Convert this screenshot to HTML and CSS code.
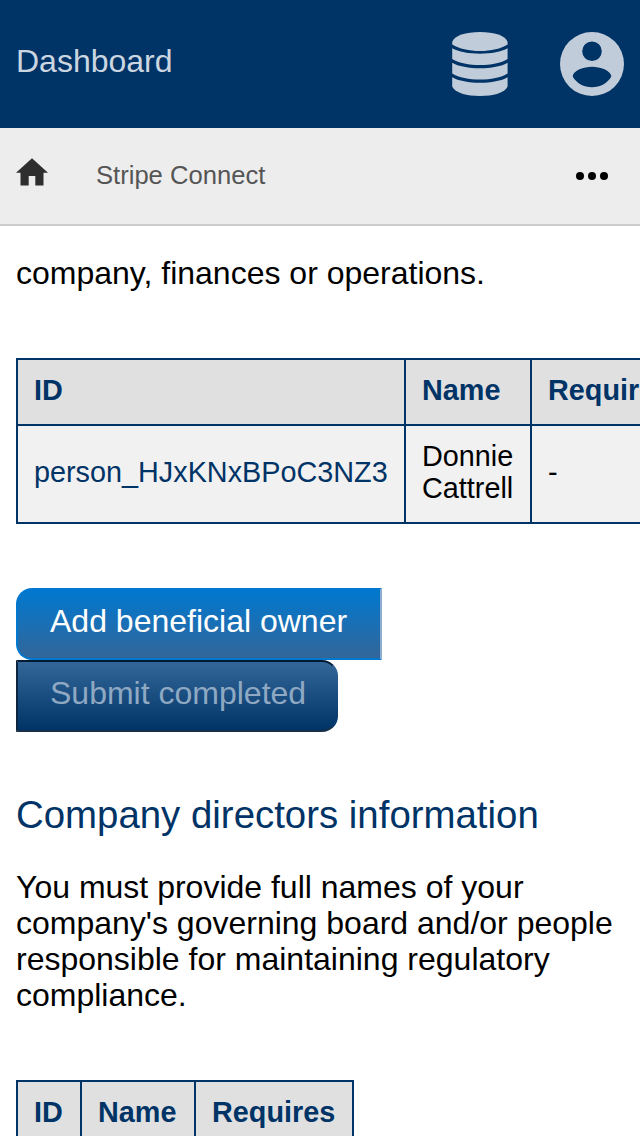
FILE: index.html
```html
<!DOCTYPE html>
<html lang="en">
<head>
<meta charset="utf-8">
<title>Stripe Connect</title>
<link rel="stylesheet" href="styles.css">
</head>
<body>
<header class="topbar">
  <span class="topbar-title">Dashboard</span>
  <div class="topbar-icons">
    <svg width="56" height="64" viewBox="0 0 56 64" fill="currentColor">
      <path d="M.2 10C2 3.500 14 0 28 0s25.800 3.500 27.600 10V12.500C49 16.800 39 19 28 19S7 16.800.2 12.500z"/>
      <path d="M.2 16.300C12 23.500 44 23.500 55.600 16.300V27C49 31 39 33 28 33S7 31 .2 27z"/>
      <path d="M.2 30.700C12 38 44 38 55.600 30.700V41.500C49 45.500 39 47.500 28 47.500S7 45.500 .2 41.500z"/>
      <path d="M.2 45.300C12 52.600 44 52.600 55.600 45.300V54.500C53 61 41 64 28 64S3 61 .2 54.500z"/>
    </svg>
    <svg width="64" height="64" viewBox="0 0 64 64" fill="currentColor" fill-rule="evenodd">
      <path d="M32 0a32 32 0 1 1 0 64 32 32 0 0 1 0-64zM32 9.400a9.800 9.800 0 1 0 0 19.600 9.800 9.800 0 0 0 0-19.600zM12.700 44.500C16.500 51.500 24 55.200 32 55.200S47.500 51.500 51.300 44.500C51 38.500 40 34.800 32 34.800S13 38.500 12.700 44.500z"/>
    </svg>
  </div>
</header>
<nav class="subbar">
  <svg class="home" width="32" height="28" viewBox="0 0 32 28"><path d="M16 .3L32 14.700H27.500V27.600H19.300V18H12.700V27.600H4.500V14.700H0z"/></svg>
  <span class="crumb">Stripe Connect</span>
  <svg class="dots" width="32" height="8" viewBox="0 0 32 8"><circle cx="4" cy="4" r="4"/><circle cx="16" cy="4" r="4"/><circle cx="28" cy="4" r="4"/></svg>
</nav>
<main class="content">
  <p class="text intro">company, finances or operations.</p>
  <table class="grid owners">
    <tr><th class="col-id">ID</th><th class="col-name">Name</th><th class="col-req">Requires</th></tr>
    <tr><td><a class="link">person_HJxKNxBPoC3NZ3</a></td><td>Donnie Cattrell</td><td>-</td></tr>
  </table>
  <div class="actions">
    <button class="btn btn-add">Add beneficial owner</button>
    <button class="btn btn-submit">Submit completed</button>
  </div>
  <h2 class="heading">Company directors information</h2>
  <p class="text">You must provide full names of your company's governing board and/or people responsible for maintaining regulatory compliance.</p>
  <table class="grid directors">
    <tr><th class="dir-id">ID</th><th class="dir-name">Name</th><th class="dir-req">Requires</th></tr>
  </table>
</main>
</body>
</html>
```
FILE: styles.css
```css
* { box-sizing: border-box; }
html { overflow: hidden; }
body {
  margin: 0;
  height: 1136px;
  overflow: hidden;
  background: #fff;
  color: #000;
  font: 32px/36px "Liberation Sans", Arial, sans-serif;
}
.topbar {
  display: flex;
  align-items: center;
  justify-content: space-between;
  height: 128px;
  padding: 0 16px;
  background: #036;
  color: #c0ccd9;
}
.topbar-title { color: #ccd6e0; padding-bottom: 6px; }
.topbar-icons { display: flex; gap: 52px; }
.subbar {
  display: flex;
  align-items: center;
  height: 98px;
  padding: 0 32px 0 16px;
  background: #ededed;
  border-bottom: 2px solid #ccc;
}
.home { fill: #2e2e2e; margin-bottom: 8px; }
.crumb { flex: 1; margin-left: 48px; padding-bottom: 2px; color: #555; font-size: 25.6px; }
.content { padding: 29px 16px 0; overflow: hidden; }
.text { margin: 0; }
.grid {
  border-collapse: collapse;
  color: #000;
  font-size: 28.8px;
  line-height: 32px;
}
.grid th, .grid td {
  padding: 14px 16px 18px;
  border: 2px solid #036;
  text-align: left;
}
.grid th { height: 66px; background: #e0e0e0; color: #036; }
.grid td { height: 98px; background: #f1f1f1; }
.owners { width: 701px; margin-top: 67px; table-layout: fixed; }
.col-id { width: 388px; }
.col-name { width: 126px; }
.link { color: #036; }
.actions {
  display: flex;
  flex-direction: column;
  align-items: flex-start;
  margin-top: 64px;
}
.btn {
  height: 72px;
  padding: 0 0 6px 32px;
  font: inherit;
  text-align: left;
  white-space: nowrap;
}
.btn-add {
  width: 366px;
  border: 2px solid #0078d0;
  border-right-color: #8cadce;
  border-radius: 16px 0 0 16px;
  background: linear-gradient(#0078d0, #369);
  color: #fff;
}
.btn-submit {
  width: 322px;
  border: 2px solid;
  border-color: #001a33 transparent #19304a #0d2640;
  border-radius: 0 16px 16px 0;
  background: linear-gradient(#369, #036);
  color: #8fa9c3;
}
.heading {
  margin: 60px 0 31px;
  color: #036;
  font-size: 38.4px;
  font-weight: 400;
  line-height: 46px;
}
.directors { width: 338px; margin-top: 67px; table-layout: fixed; }
.dir-id { width: 64px; }
.dir-name { width: 114px; }
```
